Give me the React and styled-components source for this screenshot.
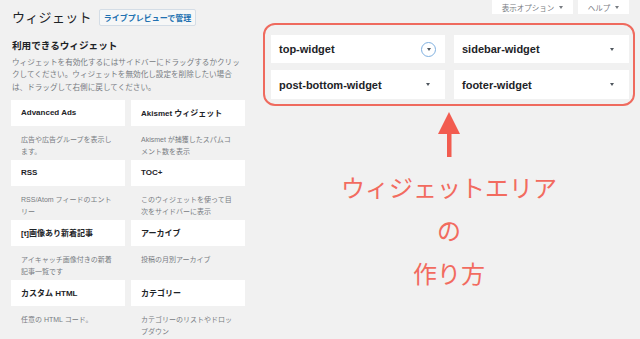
import React from "react";
import styled, { createGlobalStyle } from "styled-components";

const Global = createGlobalStyle`
  html, body { margin: 0; padding: 0; background: #f1f1f1; }
  body { font-family: "Liberation Sans", "Noto Sans CJK JP", sans-serif; color: #1d2327; }
  * { box-sizing: border-box; }
`;

const Page = styled.div`
  width: 640px;
  height: 339px;
  overflow: hidden;
  display: flex;
  gap: 18px;
  padding-left: 11px;
  background: #f1f1f1;
`;

const LeftCol = styled.div`
  width: 234px;
  padding-top: 9px;
  display: flex;
  flex-direction: column;
`;

const TitleRow = styled.div`
  display: flex;
  align-items: center;
  gap: 7px;
  height: 17px;
  padding-left: 1px;
`;

const Title = styled.h1`
  margin: 0;
  font-size: 13px;
  font-weight: 400;
  line-height: 17px;
  letter-spacing: 0.3px;
  color: #1d2327;
`;

const PreviewButton = styled.span`
  display: inline-flex;
  align-items: center;
  justify-content: center;
  height: 17px;
  padding: 0 4px;
  font-size: 8px;
  font-weight: 700;
  color: #2271b1;
  background: #f6f7f7;
  border: 1px solid #d4dde6;
  border-radius: 2px;
`;

const Heading = styled.h2`
  margin: 14px 0 0 1px;
  font-size: 9.6px;
  line-height: 12px;
  font-weight: 700;
  color: #1d2327;
`;

const Description = styled.p`
  margin: 4.5px 0 0 1px;
  width: 232px;
  font-size: 7.6px;
  line-height: 12.5px;
  color: #787c82;
`;

const WidgetGrid = styled.div`
  margin-top: 5.5px;
  display: grid;
  grid-template-columns: 114px 114px;
  column-gap: 6px;
  grid-auto-rows: 60px;
`;

const Widget = styled.div`
  display: flex;
  flex-direction: column;
`;

const WidgetHead = styled.div`
  height: 26px;
  display: flex;
  align-items: center;
  padding-left: 10px;
  background: #fff;
  font-size: 8px;
  font-weight: 700;
  color: #1d2327;
`;

const WidgetDesc = styled.div`
  padding: 8px 0 0 10px;
  width: 104px;
  font-size: 7px;
  line-height: 12px;
  color: #787c82;
`;

const RightCol = styled.div`
  width: 372px;
  display: flex;
  flex-direction: column;
`;

const MetaLinks = styled.div`
  display: flex;
  justify-content: flex-end;
  gap: 5px;
  padding-right: 6px;
`;

const MetaTab = styled.span`
  height: 14px;
  width: ${(p) => p.$w}px;
  display: flex;
  align-items: center;
  justify-content: center;
  gap: 5px;
  background: #fff;
  font-size: 7.5px;
  color: #787c82;
`;

const Caret = styled.span`
  display: inline-block;
  width: 0;
  height: 0;
  border-left: 2.5px solid transparent;
  border-right: 2.5px solid transparent;
  border-top: 3px solid ${(p) => p.$color || "#50575e"};
`;

const AreaBox = styled.div`
  margin-top: 9px;
  height: 83px;
  border: 2px solid #ef6a5e;
  border-radius: 12px;
  padding: 10px 4px 5px 6px;
  display: grid;
  grid-template-columns: 174px 175px;
  grid-template-rows: 28px 29px;
  column-gap: 9px;
  row-gap: 7px;
`;

const Sidebar = styled.div`
  background: #fff;
  display: flex;
  align-items: center;
  justify-content: space-between;
  padding: 0 15px 0 8px;
  font-size: 11px;
  font-weight: 700;
  color: #1d2327;
`;

const ToggleRing = styled.span`
  width: 15px;
  height: 15px;
  margin-right: -6px;
  border: 1px solid #7fb0e0;
  border-radius: 50%;
  display: flex;
  align-items: center;
  justify-content: center;
`;

const Annotation = styled.div`
  display: flex;
  flex-direction: column;
  align-items: center;
  padding-top: 6px;
`;

const Arrow = styled.svg`
  display: block;
`;

const NoteText = styled.div`
  margin-top: 8px;
  text-align: center;
  font-family: "Noto Sans CJK JP", sans-serif;
  font-size: 24px;
  font-weight: 400;
  line-height: 43px;
  color: #f26b5f;
`;

const widgets = [
  { t: "Advanced Ads", d: "広告や広告グループを表示します。" },
  { t: "Akismet ウィジェット", d: "Akismet が捕獲したスパムコメント数を表示" },
  { t: "RSS", d: "RSS/Atom フィードのエントリー" },
  { t: "TOC+", d: "このウィジェットを使って目次をサイドバーに表示" },
  { t: "[t]画像あり新着記事", d: "アイキャッチ画像付きの新着記事一覧です" },
  { t: "アーカイブ", d: "投稿の月別アーカイブ" },
  { t: "カスタム HTML", d: "任意の HTML コード。" },
  { t: "カテゴリー", d: "カテゴリーのリストやドロップダウン" },
];

const areas = [
  { name: "top-widget", focus: true },
  { name: "sidebar-widget" },
  { name: "post-bottom-widget" },
  { name: "footer-widget" },
];

export default function App() {
  return (
    <>
      <Global />
      <Page>
        <LeftCol>
          <TitleRow>
            <Title>ウィジェット</Title>
            <PreviewButton>ライブプレビューで管理</PreviewButton>
          </TitleRow>
          <Heading>利用できるウィジェット</Heading>
          <Description>
            ウィジェットを有効化するにはサイドバーにドラッグするかクリックしてください。ウィジェットを無効化し設定を削除したい場合は、ドラッグして右側に戻してください。
          </Description>
          <WidgetGrid>
            {widgets.map((w) => (
              <Widget key={w.t}>
                <WidgetHead>{w.t}</WidgetHead>
                <WidgetDesc>{w.d}</WidgetDesc>
              </Widget>
            ))}
          </WidgetGrid>
        </LeftCol>
        <RightCol>
          <MetaLinks>
            <MetaTab $w={81}>
              表示オプション <Caret $color="#787c82" />
            </MetaTab>
            <MetaTab $w={51}>
              ヘルプ <Caret $color="#787c82" />
            </MetaTab>
          </MetaLinks>
          <AreaBox>
            {areas.map((a) => (
              <Sidebar key={a.name}>
                {a.name}
                {a.focus ? (
                  <ToggleRing>
                    <Caret />
                  </ToggleRing>
                ) : (
                  <Caret />
                )}
              </Sidebar>
            ))}
          </AreaBox>
          <Annotation>
            <Arrow width="24" height="45" viewBox="0 0 24 45">
              <polygon points="12,0 23,22 1,22" fill="#f25c50" />
              <rect x="10" y="21" width="4.5" height="24" fill="#f25c50" />
            </Arrow>
            <NoteText>
              ウィジェットエリア
              <br />の<br />
              作り方
            </NoteText>
          </Annotation>
        </RightCol>
      </Page>
    </>
  );
}
